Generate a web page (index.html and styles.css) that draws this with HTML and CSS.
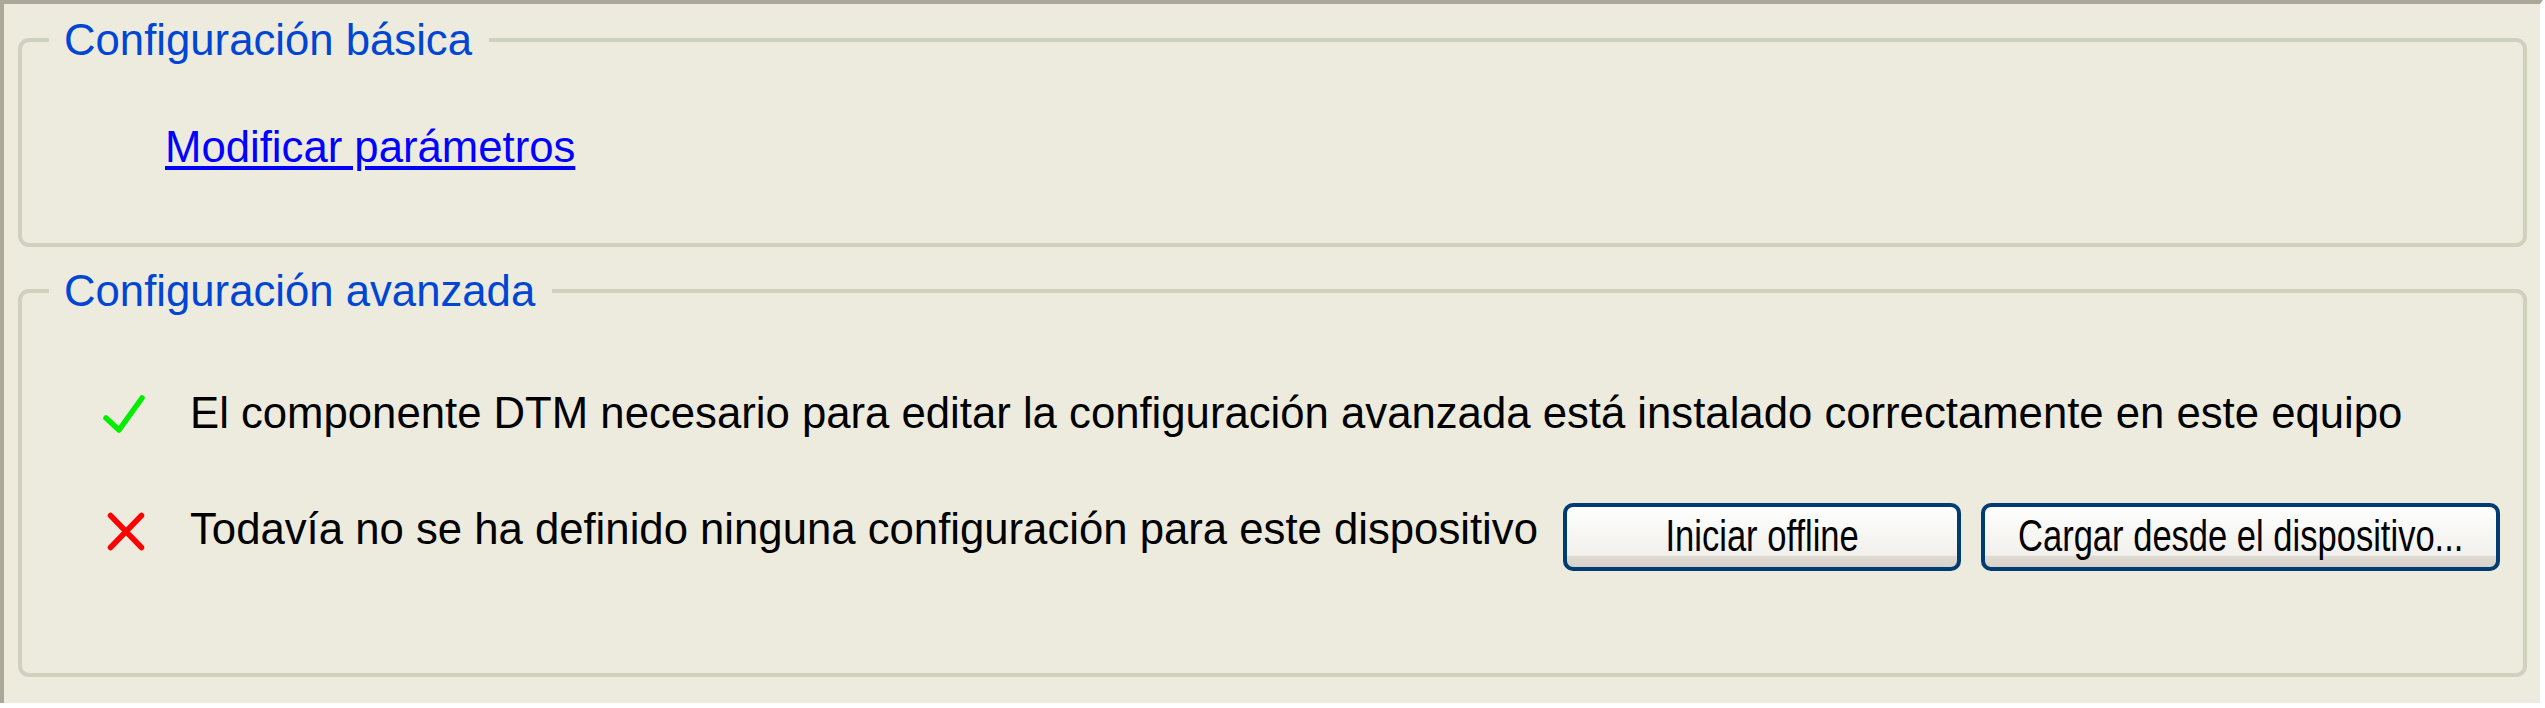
FILE: index.html
```html
<!DOCTYPE html>
<html lang="es">
<head>
<meta charset="utf-8">
<title>Configuración</title>
<link rel="stylesheet" href="styles.css">
</head>
<body>
<div class="panel">
  <fieldset class="group group-basic">
    <legend class="group-title">Configuración básica</legend>
    <a class="link" href="#">Modificar parámetros</a>
  </fieldset>
  <fieldset class="group group-advanced">
    <legend class="group-title">Configuración avanzada</legend>
    <div class="status-row status-ok">
      <svg class="status-icon" viewBox="0 0 50 50" width="50" height="50" aria-hidden="true">
        <polyline points="6,30 19,42 42,10" fill="none" stroke="#00ee00" stroke-width="5.5" stroke-linecap="round" stroke-linejoin="round"/>
      </svg>
      <span class="status-text">El componente DTM necesario para editar la configuración avanzada está instalado correctamente en este equipo</span>
    </div>
    <div class="status-row status-missing">
      <svg class="status-icon" viewBox="0 0 50 50" width="50" height="50" aria-hidden="true">
        <path d="M10.5 12.5 L41.5 44.5 M41.5 12.5 L10.5 44.5" fill="none" stroke="#ff0000" stroke-width="5.5" stroke-linecap="round"/>
      </svg>
      <span class="status-text status-text-offset">Todavía no se ha definido ninguna configuración para este dispositivo</span>
      <div class="actions">
        <button class="btn btn-offline" type="button"><span class="btn-label">Iniciar offline</span></button>
        <button class="btn btn-load" type="button"><span class="btn-label">Cargar desde el dispositivo...</span></button>
      </div>
    </div>
  </fieldset>
</div>
</body>
</html>
```

FILE: styles.css
```css
html, body {
  margin: 0;
  padding: 0;
  background: #ffffff;
}

body {
  font-family: "Liberation Sans", Arial, sans-serif;
  font-size: 43.7px;
  line-height: 50px;
  color: #000000;
}

.panel {
  height: 699px;
  margin-right: 2px;
  background: #edeade;
  background-clip: padding-box;
  border-top: 4px solid #aca899;
  border-left: 4px solid #aca899;
  border-right: 3px solid transparent;
  display: flow-root;
}

.group {
  margin: 0 13px 0 14px;
  padding: 0 0 0 27px;
  border: 4px solid #d0d0bf;
  border-radius: 11px;
  min-width: 0;
}

.group-basic {
  margin-top: 11px;
  padding-bottom: 71px;
}

.group-advanced {
  margin-top: 19px;
  padding-bottom: 102px;
}

.group-title {
  padding: 0 17px 0 15px;
  color: #0046d5;
  line-height: 50px;
}

.link {
  display: inline-block;
  margin: 57px 0 0 116px;
  color: #0000ff;
  text-decoration: underline;
  text-decoration-thickness: 3.5px;
  text-underline-offset: 4px;
}

.status-row {
  display: flex;
  align-items: flex-start;
  margin-left: 51px;
}

.status-ok {
  margin-top: 72px;
}

.status-missing {
  margin-top: 65px;
}

.status-icon {
  flex: none;
  display: block;
  margin-right: 40px;
}

.status-text {
  white-space: nowrap;
}

.status-text-offset {
  margin-top: 1px;
}

.actions {
  display: flex;
  gap: 20px;
  margin-left: 25px;
}

.btn {
  box-sizing: border-box;
  display: flex;
  align-items: center;
  justify-content: center;
  overflow: visible;
  height: 68px;
  padding: 0 0 3px;
  border: 4px solid #003c74;
  border-radius: 10px;
  background: linear-gradient(to bottom, #ffffff 0%, #f7f7f4 40%, #f1f0ec 80%, #dedad2 83%, #d8d3c8 100%);
  font-family: "Liberation Sans", Arial, sans-serif;
  font-size: 44px;
  color: #000000;
  white-space: nowrap;
}

.btn-label {
  display: inline-block;
  flex: none;
  line-height: 58px;
  transform: scaleX(0.785);
}

.btn-offline {
  width: 398px;
}

.btn-load {
  width: 519px;
}
```
